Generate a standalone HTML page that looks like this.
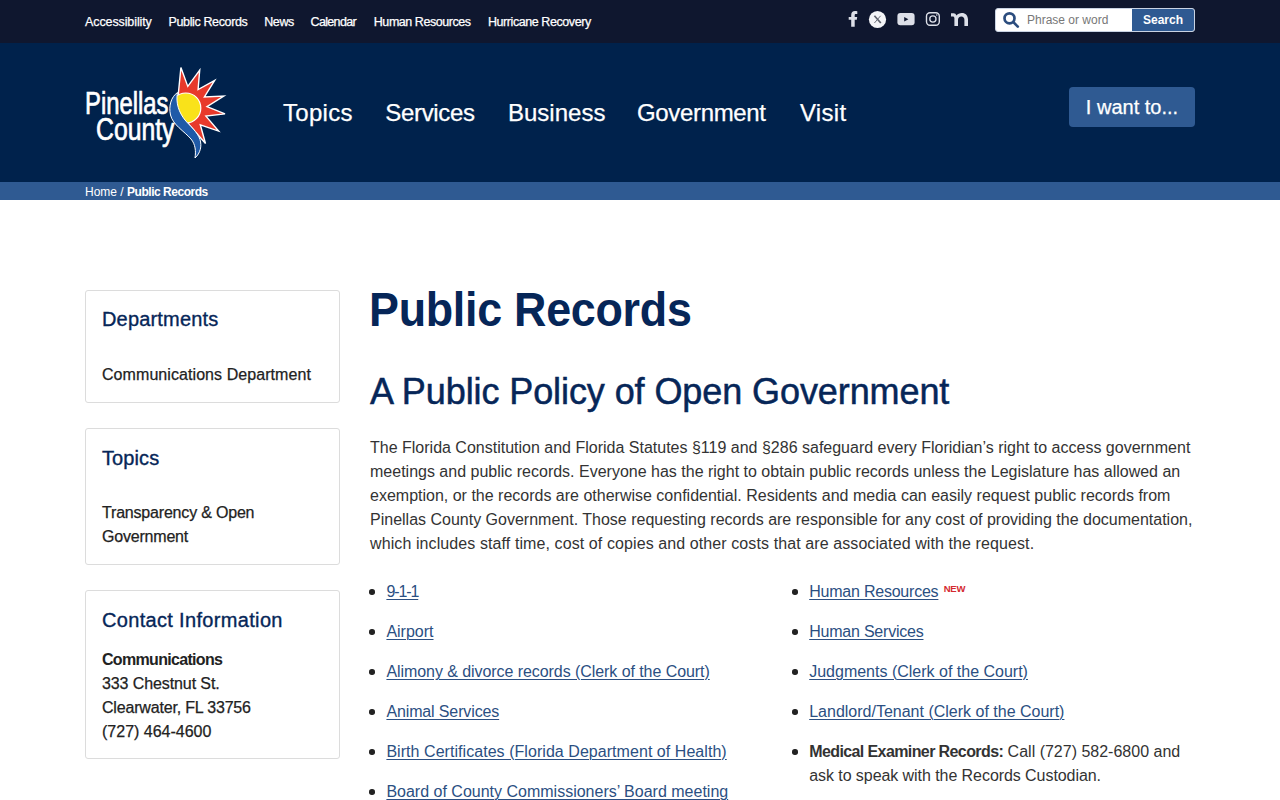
<!DOCTYPE html>
<html lang="en">
<head>
<meta charset="utf-8">
<title>Public Records | Pinellas County</title>
<style>
*{box-sizing:border-box;margin:0;padding:0}
html,body{width:1280px;height:800px;overflow:hidden;background:#fff;font-family:"Liberation Sans",sans-serif;color:#333}
a{color:inherit;text-decoration:none}
.abs{position:absolute}
#topbar{position:absolute;left:0;top:0;width:1280px;height:43px;background:#0f172f}
#topbar .tl{position:absolute;top:15px;font-size:12.5px;color:#fff;white-space:nowrap;line-height:15px}
#header{position:absolute;left:0;top:43px;width:1280px;height:139px;background:#00224c}
#crumb{position:absolute;left:0;top:182px;width:1280px;height:18px;background:#2f5a92}
#crumb .c{position:absolute;left:85px;top:3px;font-size:12px;line-height:14px;color:#fff;white-space:nowrap}
.nav{position:absolute;top:99px;font-size:24px;line-height:28px;color:#fff;white-space:nowrap}
#iwant{position:absolute;left:1069px;top:87px;width:126px;height:40px;background:#2f5a92;border-radius:4px;color:#fff;font-size:20px;line-height:40px;text-align:center}
#search{position:absolute;left:995px;top:8px;width:200px;height:24px;border:1px solid #c9d3e3;border-radius:3px;background:#fff;overflow:hidden}
#search .btn{position:absolute;right:0;top:0;width:62px;height:22px;background:#2f5a92;color:#fff;font-weight:bold;font-size:12px;line-height:22px;text-align:center}
#search .ph{position:absolute;left:31px;top:4px;font-size:12px;line-height:14px;color:#777}
.card{position:absolute;left:85px;width:255px;border:1px solid #dcdcdc;border-radius:3px;background:#fff}
.card h3{position:absolute;left:16px;font-size:20px;font-weight:normal;color:#062658;white-space:nowrap;line-height:24px}
.card .t{position:absolute;left:16px;font-size:16px;color:#222;line-height:24px;white-space:nowrap}
h1{position:absolute;left:369px;top:281px;font-size:49px;line-height:56px;color:#062658;font-weight:bold;white-space:nowrap;letter-spacing:-0.3px;transform:scaleX(0.915);transform-origin:0 0}
h2{position:absolute;left:370px;top:369.5px;letter-spacing:-0.09px;font-size:36px;line-height:44px;color:#062658;font-weight:normal;white-space:nowrap}
.p{position:absolute;left:370px;font-size:16px;line-height:24px;color:#333;white-space:nowrap}
.li{position:absolute;font-size:16px;line-height:24px;white-space:nowrap;color:#333}
.li a{color:#2b4f82;text-decoration:underline;text-decoration-thickness:1px;text-underline-offset:2px}
.dot{position:absolute;width:5.5px;height:5.5px;border-radius:50%;background:#222}
.new{position:absolute;left:134.5px;top:2.5px;font-size:9.5px;font-weight:bold;color:#d42a2f;letter-spacing:-0.25px;line-height:12px}
.tl,.nav,#iwant{-webkit-text-stroke:0.25px #fff}
.card h3{-webkit-text-stroke:0.35px #062658}
h2{-webkit-text-stroke:0.5px #062658}
.card .t{-webkit-text-stroke:0.25px #222}
.card .t[style*="bold"]{-webkit-text-stroke:0}
</style>
</head>
<body>
<div id="topbar">
  <a class="tl" style="left:85px;letter-spacing:-0.1px">Accessibility</a>
  <a class="tl" style="left:168.5px;letter-spacing:-0.37px">Public Records</a>
  <a class="tl" style="left:264.3px;letter-spacing:-0.45px">News</a>
  <a class="tl" style="left:310.5px;letter-spacing:-0.65px">Calendar</a>
  <a class="tl" style="left:373.8px;letter-spacing:-0.45px">Human Resources</a>
  <a class="tl" style="left:488px;letter-spacing:-0.43px">Hurricane Recovery</a>
  <div id="search"><svg class="abs" style="left:-1px;top:-1px" width="40" height="24" viewBox="995 8 40 24"><circle cx="1009.5" cy="18.3" r="5" fill="none" stroke="#2c4d7e" stroke-width="2.7"/><path d="M1013.6,22.4 L1017.8,26.6" stroke="#2c4d7e" stroke-width="2.7" stroke-linecap="round"/></svg><span class="ph">Phrase or word</span><span class="btn">Search</span></div>
</div>
<div id="header">
</div>
<svg class="abs" style="left:0;top:0" width="240" height="170" viewBox="0 0 240 170">
  <text x="85" y="114" font-family="Liberation Sans" font-size="31" fill="#fff" stroke="#fff" stroke-width="0.7" textLength="83.5" lengthAdjust="spacingAndGlyphs">Pinellas</text>
  <text x="96" y="140" font-family="Liberation Sans" font-size="32" fill="#fff" stroke="#fff" stroke-width="0.7" textLength="78.5" lengthAdjust="spacingAndGlyphs">County</text>
  <polygon points="178.4,93 180.9,67.6 187.8,86.4 199.7,70.1 198.1,89.5 214.7,80.4 204.4,97 223.8,96 207,106.7 225,113.9 205.9,116.1 218.6,131.1 200.3,124.8 205.5,143.5 189.8,125.5 180,110" fill="#e8392b" stroke="#fff" stroke-width="1.4" stroke-linejoin="miter"/>
  <circle cx="185.8" cy="108" r="15" fill="#f9e21a" stroke="#fff" stroke-width="1.2"/>
  <path d="M177.5,92.5 C171,97 168.5,106 170.5,115 C173,125 184,131 191,139 C195.5,144.5 196,151 195,158 C200.5,153 202,146 200,139.5 C197.5,132 190,126 185,120 C179,112.5 175.5,103 177.5,92.5 Z" fill="#1f5aa8" stroke="#fff" stroke-width="1"/>
</svg>
<svg class="abs" style="left:840px;top:0" width="140" height="43" viewBox="840 0 140 43">
  <path d="M851.2,26.8 V15.2 C851.2,12.5 852.6,11.1 855,11.1 C856,11.1 857,11.2 857.3,11.3 V13.9 H855.9 C855,13.9 854.7,14.4 854.7,15.2 V17 H857.2 L856.8,19.8 H854.7 V26.8 Z M848.7,17 H851.5 V19.8 H848.7 Z" fill="#dcdfe8"/>
  <circle cx="877.5" cy="19.5" r="8.6" fill="#f4f5f8"/>
  <path d="M874.4,15.8 L880.8,23" stroke="#5d616c" stroke-width="1.7" fill="none"/><path d="M880.6,15.8 L874.4,23" stroke="#5d616c" stroke-width="0.9" fill="none"/>
  <rect x="897.4" y="13" width="17.2" height="12.2" rx="3" fill="#dcdfe8"/>
  <path d="M904.2,17 L908.4,19.2 L904.2,21.4 Z" fill="#0f172f"/>
  <rect x="926.5" y="12.7" width="12.8" height="12.6" rx="3.5" fill="none" stroke="#dcdfe8" stroke-width="1.4"/>
  <circle cx="932.9" cy="19" r="3.1" fill="none" stroke="#dcdfe8" stroke-width="1.3"/>
  <circle cx="936.8" cy="15" r="0.8" fill="#dcdfe8"/>
  <path d="M951,13.3 L953.6,13.3 C955,13.3 955.9,14.2 956.3,15.4 C957.6,13.9 959.6,13 961.8,13 C965.6,13 968,15.6 968,19.6 V26.1 H964.4 V19.8 C964.4,17.8 963.3,16.5 961.3,16.5 C959.3,16.5 958,17.9 958,19.8 V26.1 H954.4 V18.3 C954.4,17.2 953.7,16.6 952.7,16.6 H951 Z" fill="#dcdfe8"/>
</svg>

<a class="nav" style="left:283px;letter-spacing:0.3px">Topics</a>
<a class="nav" style="left:385.2px;letter-spacing:-0.3px">Services</a>
<a class="nav" style="left:508px">Business</a>
<a class="nav" style="left:637px;letter-spacing:-0.34px">Government</a>
<a class="nav" style="left:800px;letter-spacing:0.3px">Visit</a>
<a id="iwant">I want to...</a>
<div id="crumb"><div class="c">Home / <b style="letter-spacing:-0.47px">Public Records</b></div></div>

<div class="card" style="top:290px;height:113px">
  <h3 style="top:16px;letter-spacing:0.18px">Departments</h3>
  <div class="t" style="top:72px;letter-spacing:0.07px">Communications Department</div>
</div>
<div class="card" style="top:428px;height:137px">
  <h3 style="top:17px;letter-spacing:0.1px">Topics</h3>
  <div class="t" style="top:72px;letter-spacing:-0.19px">Transparency &amp; Open</div>
  <div class="t" style="top:96px;letter-spacing:-0.2px">Government</div>
</div>
<div class="card" style="top:590px;height:169px">
  <h3 style="top:17px;letter-spacing:0.33px">Contact Information</h3>
  <div class="t" style="top:57px;font-weight:bold;letter-spacing:-0.68px">Communications</div>
  <div class="t" style="top:80.5px;letter-spacing:-0.1px">333 Chestnut St.</div>
  <div class="t" style="top:104.5px;letter-spacing:-0.18px">Clearwater, FL 33756</div>
  <div class="t" style="top:128.5px">(727) 464-4600</div>
</div>

<h1>Public Records</h1>
<h2>A Public Policy of Open Government</h2>
<div class="p" style="top:436px">The Florida Constitution and Florida Statutes §119 and §286 safeguard every Floridian’s right to access government</div>
<div class="p" style="top:460px">meetings and public records. Everyone has the right to obtain public records unless the Legislature has allowed an</div>
<div class="p" style="top:484px">exemption, or the records are otherwise confidential. Residents and media can easily request public records from</div>
<div class="p" style="top:508px">Pinellas County Government. Those requesting records are responsible for any cost of providing the documentation,</div>
<div class="p" style="top:532px;letter-spacing:0.095px">which includes staff time, cost of copies and other costs that are associated with the request.</div>

<span class="dot" style="left:369px;top:589px"></span>
<span class="dot" style="left:369px;top:629px"></span>
<span class="dot" style="left:369px;top:669px"></span>
<span class="dot" style="left:369px;top:709px"></span>
<span class="dot" style="left:369px;top:749px"></span>
<span class="dot" style="left:369px;top:789px"></span>
<div class="li" style="left:386.4px;top:580px;letter-spacing:-1.1px"><a>9-1-1</a></div>
<div class="li" style="left:386.4px;top:620px"><a>Airport</a></div>
<div class="li" style="left:386.4px;top:660px;letter-spacing:-0.065px"><a>Alimony &amp; divorce records (Clerk of the Court)</a></div>
<div class="li" style="left:386.4px;top:700px;letter-spacing:-0.13px"><a>Animal Services</a></div>
<div class="li" style="left:386.4px;top:740px;letter-spacing:0.05px"><a>Birth Certificates (Florida Department of Health)</a></div>
<div class="li" style="left:386.4px;top:780px"><a>Board of County Commissioners’ Board meeting</a></div>

<span class="dot" style="left:792px;top:589px"></span>
<span class="dot" style="left:792px;top:629px"></span>
<span class="dot" style="left:792px;top:669px"></span>
<span class="dot" style="left:792px;top:709px"></span>
<span class="dot" style="left:792px;top:749px"></span>
<div class="li" style="left:809.2px;top:580px;letter-spacing:-0.22px"><a>Human Resources</a><span class="new">NEW</span></div>
<div class="li" style="left:809.2px;top:620px;letter-spacing:-0.22px"><a>Human Services</a></div>
<div class="li" style="left:809.2px;top:660px"><a>Judgments (Clerk of the Court)</a></div>
<div class="li" style="left:809.2px;top:700px"><a>Landlord/Tenant (Clerk of the Court)</a></div>
<div class="li" style="left:809.2px;top:740px"><b style="letter-spacing:-0.6px">Medical Examiner Records:</b> Call (727) 582-6800 and</div>
<div class="li" style="left:809.2px;top:764px;letter-spacing:-0.065px">ask to speak with the Records Custodian.</div>
</body>
</html>
